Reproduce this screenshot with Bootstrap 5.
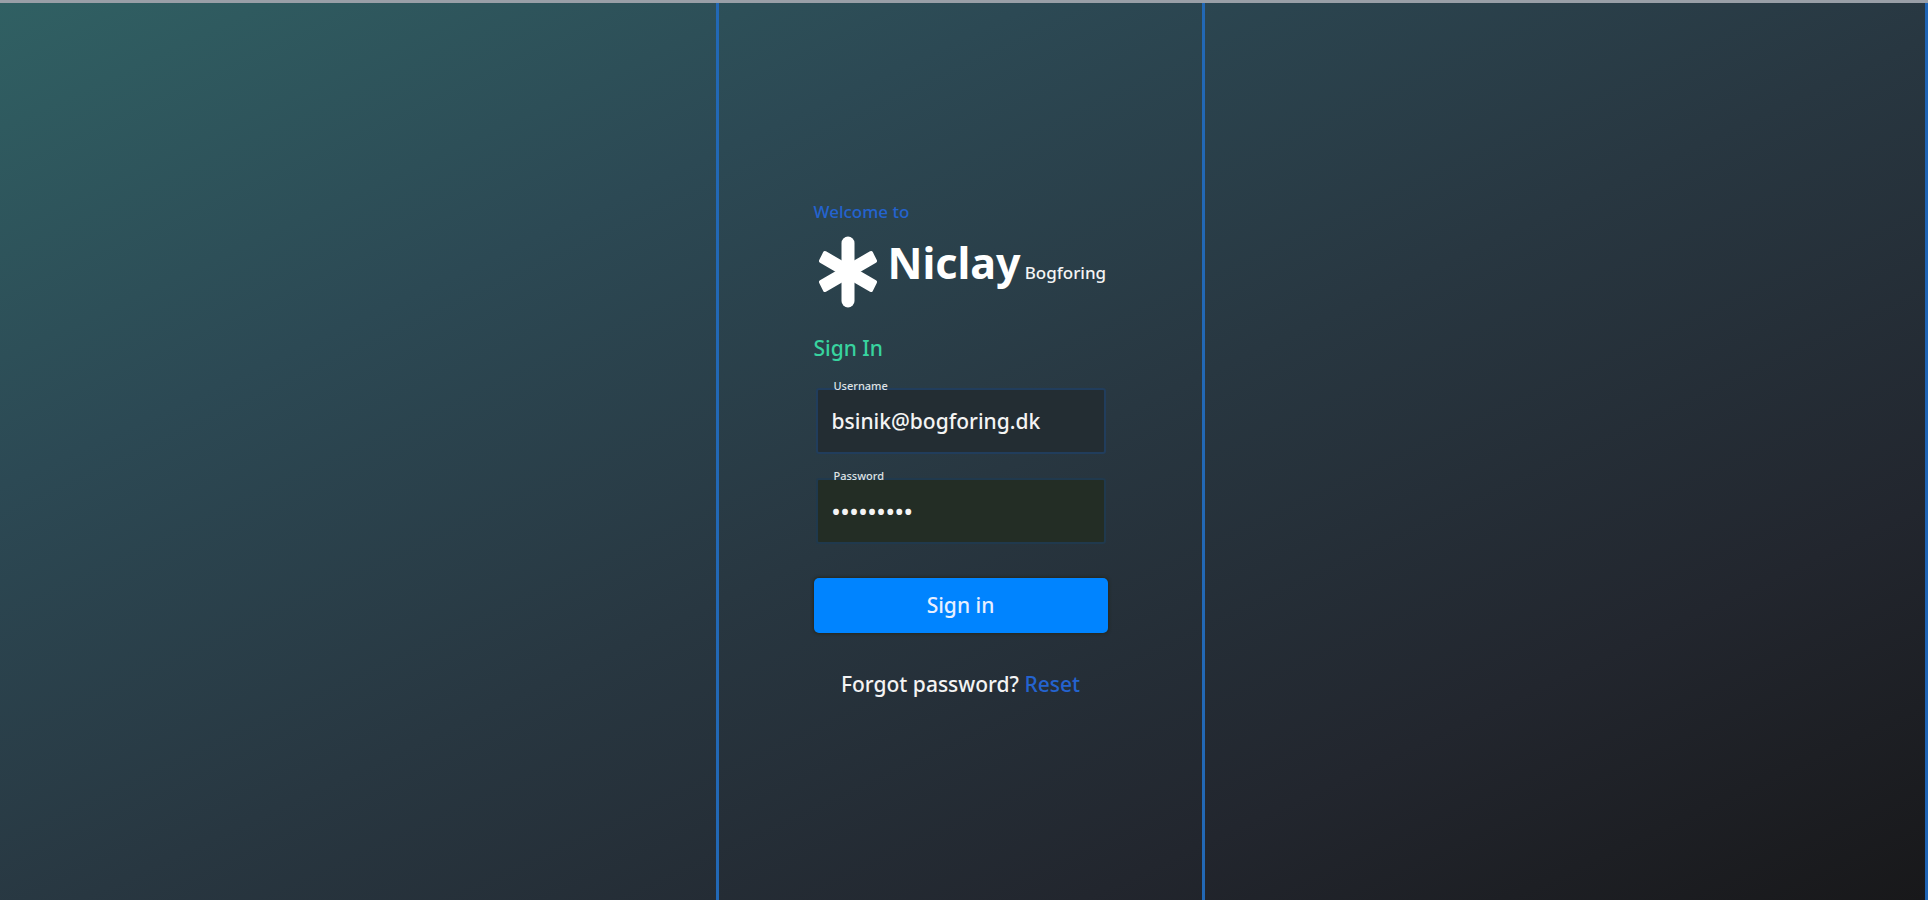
<!DOCTYPE html>
<html lang="en">
<head>
<meta charset="utf-8">
<meta name="viewport" content="width=device-width, initial-scale=1">
<title>Niclay Bogforing - Sign In</title>
<link href="https://cdn.jsdelivr.net/npm/bootstrap@5.3.0/dist/css/bootstrap.min.css" rel="stylesheet">
<style>
  body {
    font-family: "Noto Sans", "Open Sans", sans-serif;
    font-size: 21px;
    font-weight: 500;
    line-height: 28px;
    color: #f4f4f4;
    border-top: 3px solid #999fa7;
    background: linear-gradient(to bottom right, #306063 0%, #2c4954 27%, #283741 52%, #22262e 78%, #18181a 100%) fixed;
  }
  .page-grid { display: grid; grid-template-columns: 716fr 489fr 720fr; border-right: 3px solid #1f64b4; }
  .panel { grid-column: 2; border: solid #2268b5; border-width: 0 3px; }
  .login { width: 100%; max-width: 294px; }
  .accent { color: #2463cf; }
  .welcome { font-size: 17px; line-height: 24px; }
  .logo-mark { width: 66px; height: 72px; }
  .brand-name { font-size: 43px; line-height: 62px; font-weight: 700; color: #fff; }
  .brand-sub { font-size: 17px; }
  .heading { font-size: 21px; line-height: 28px; font-weight: 500; color: #38d39f; margin: 26px 0; }
  .field { margin: 0 2px; }
  .field label { position: absolute; top: -12px; left: 18px; font-size: 11px; line-height: 20px; color: #dfe3e6; }
  .field .form-control {
    height: 66px; padding: 0 14px; border: 2px solid #213d5c; border-radius: 3px;
    background: #232d33; color: #f4f4f4; font-size: 21px; font-weight: 500;
  }
  .field .form-control.filled { background: #232d25; border-color: #20394d; }
  .field .form-control[type=password] { font-size: 24px; }
  .btn-sign { height: 55px; margin-top: 34px; background: #0084ff; color: #e8efff; font-size: 21px; font-weight: 500; border: 0; border-radius: 5px; box-shadow: 0 0 3px 1px #26271c; }
  .btn-sign:hover { background: #0a78e2; color: #fff; }
  .forgot { margin: 37px 0 5px; }
</style>
</head>
<body class="min-vh-100 d-flex">
<div class="page-grid flex-grow-1">
  <main class="panel d-flex flex-column align-items-center justify-content-center">
    <form class="login">
      <div class="welcome accent">Welcome to</div>
      <div class="d-flex align-items-start mt-2">
        <svg class="logo-mark flex-shrink-0 mt-1" viewBox="0 0 66 72" aria-hidden="true">
          <g stroke="#fff" stroke-width="13" stroke-linejoin="round">
            <path d="M34 7V65" stroke-linecap="round"/>
            <path d="M10 22L58 50M58 22L10 50" stroke-width="10"/>
            <path fill="#fff" stroke-width="4" d="M11 17L61 46L57 54L7 25ZM57 17L7 46L11 54L61 25Z"/>
          </g>
        </svg>
        <div class="d-flex align-items-baseline ms-2 gap-1"><span class="brand-name">Niclay</span><span class="brand-sub">Bogforing</span></div>
      </div>
      <h1 class="heading">Sign In</h1>
      <div class="field position-relative mb-4">
        <input class="form-control" type="text" id="user" value="bsinik@bogforing.dk">
        <label for="user">Username</label>
      </div>
      <div class="field position-relative">
        <input class="form-control filled" type="password" id="pass" value="password1">
        <label for="pass">Password</label>
      </div>
      <button class="btn btn-sign w-100" type="button">Sign in</button>
      <p class="forgot text-center">Forgot password? <a class="accent text-decoration-none" href="#">Reset</a></p>
    </form>
  </main>
</div>
<script src="https://cdn.jsdelivr.net/npm/bootstrap@5.3.0/dist/js/bootstrap.bundle.min.js"></script>
</body>
</html>
